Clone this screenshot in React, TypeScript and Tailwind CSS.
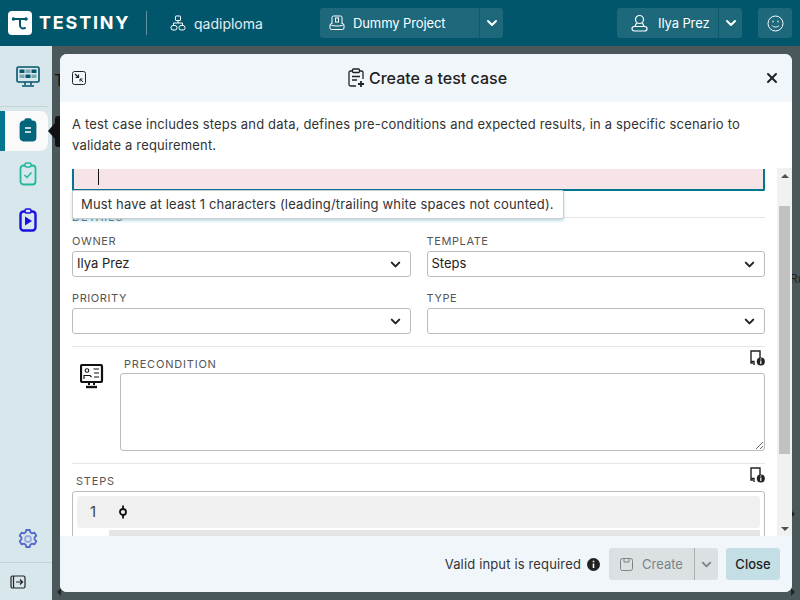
import React from 'react';
import { ChevronDown, X } from 'lucide-react';

const ff = { fontFamily: 'Inter, sans-serif' };

function TestinyLogo() {
  return (
    <svg width="24" height="24" viewBox="0 0 24 24">
      <rect width="24" height="24" rx="4" fill="#fff" />
      <path d="M6 8h12M12 8v6c0 3 2 4 5 3" stroke="#02566b" strokeWidth="2" fill="none" strokeLinecap="round" />
      <circle cx="5.500" cy="8" r="1.800" fill="#02566b" />
      <circle cx="18" cy="8" r="1.800" fill="#02566b" />
    </svg>
  );
}

function SelectField({ label, value }: { label: string; value?: string }) {
  return (
    <div className="flex-1 min-w-0">
      <div className="h-[18px] text-[11px] leading-[16px] tracking-[0.6px] text-[#555]">{label}</div>
      <div className="h-[26px] flex items-center justify-between border border-[#bbb] rounded-[3px] pl-[4px] pr-[7px] text-[13px] text-[#222]">
        <span>{value}</span>
        <ChevronDown size={15} strokeWidth={3.2} className="text-[#222]" />
      </div>
    </div>
  );
}

function DocInfo() {
  return (
    <svg width="16" height="16" viewBox="0 0 16 16" fill="none">
      <path d="M4 13H2V1h9v7" stroke="#222" strokeWidth="1.400" />
      <path d="M2 11.500h3v3.500" stroke="#222" strokeWidth="1.400" />
      <circle cx="11.800" cy="11.500" r="4" fill="#222" />
      <path d="M11.800 10.500v3.500M11.800 8.500v1" stroke="#fff" strokeWidth="1.200" />
    </svg>
  );
}

function Clipboard({ color, fill, width = 1.800, children }: { color: string; fill?: boolean; width?: number; children?: React.ReactNode }) {
  return (
    <svg width="18" height="24" viewBox="0 0 18 24" fill="none">
      <rect x="1.500" y="3.500" width="15" height="19" rx="3" stroke={color} strokeWidth={width} fill={fill ? color : 'none'} />
      <rect x="6" y="1" width="6" height="4" rx="1.500" stroke={color} strokeWidth="1.500" fill={fill ? color : '#d7e7ec'} />
      {children}
    </svg>
  );
}

export default function App() {
  return (
    <div style={ff} className="relative w-[800px] h-[600px] overflow-hidden bg-[#4b585b]">
      {/* top bar */}
      <header className="h-[46px] bg-[#02566b] flex items-center text-white">
        <div className="flex items-center pl-[8px] w-[146px] h-full">
          <TestinyLogo />
          <span className="ml-[7px] font-bold text-[18px] tracking-[1.800px] leading-none">TESTINY</span>
        </div>
        <div className="w-px h-[24px] bg-[#5c94a2]" />
        <div className="flex items-center ml-[23px] w-[150px] gap-[8px] text-[14px]">
          <svg width="16" height="16" viewBox="0 0 16 16" fill="none" stroke="#fff" strokeWidth="1">
            <rect x="5.500" y="1" width="5" height="4.500" rx="0.500" />
            <path d="M8 5.500V8M3.500 10.500V8h9v2.500" />
            <rect x="1" y="10.500" width="6" height="4.500" rx="2" />
            <rect x="9" y="10.500" width="6" height="4.500" rx="2" />
          </svg>
          <span className="text-[#e4eff2]">qadiploma</span>
        </div>
        <div className="flex h-[30px] rounded-[3px] bg-[#1d687b] text-[13px]">
          <div className="w-[160px] flex items-center pl-[9px] gap-[8px] border-r border-[#0e5a6d]">
            <svg width="16" height="16" viewBox="0 0 16 16" fill="none" stroke="#fff" strokeWidth="1">
              <path d="M3 9V2.500A1.500 1.500 0 0 1 4.500 1h7A1.500 1.500 0 0 1 13 2.500V9" />
              <path d="M1 9.500 3 8M15 9.500 13 8M1 9.500V13a1.500 1.500 0 0 0 1.500 1.500h11A1.500 1.500 0 0 0 15 13V9.500c-3 2-11 2-14 0z" />
              <rect x="6.500" y="3" width="3" height="4" />
            </svg>
            <span className="tracking-[-0.1px] pt-[1px]">Dummy Project</span>
          </div>
          <div className="w-[23px] flex items-center justify-center">
            <ChevronDown size={16} strokeWidth={3} />
          </div>
        </div>
        <div className="flex h-[30px] ml-[114px] rounded-[3px] bg-[#1d687b] text-[13px]">
          <div className="w-[102px] flex items-center pl-[14px] gap-[10px] border-r border-[#0e5a6d]">
            <svg width="17" height="18" viewBox="0 0 17 18" fill="none" stroke="#fff" strokeWidth="1.200">
              <circle cx="8.500" cy="5.500" r="4" />
              <path d="M5.500 9 4 12.500M11.500 9 13 12.500" />
              <rect x="1" y="12.500" width="15" height="4.500" rx="2.200" />
            </svg>
            <span className="tracking-[-0.1px] pt-[1px]">Ilya Prez</span>
          </div>
          <div className="w-[23px] flex items-center justify-center">
            <ChevronDown size={16} strokeWidth={3} />
          </div>
        </div>
        <div className="ml-[16px] w-[34px] h-[30px] rounded-[3px] bg-[#1d687b] flex items-center justify-center">
          <svg width="17" height="17" viewBox="0 0 17 17" fill="none" stroke="#fff" strokeWidth="1">
            <circle cx="8.500" cy="8.500" r="7.500" />
            <path d="M5 10.500c1.500 2 5.500 2 7 0" />
            <path d="M6 5.500v2M11 5.500v2" />
          </svg>
        </div>
      </header>

      <div className="flex h-[554px]">
        {/* sidebar */}
        <aside className="w-[52px] bg-[#d7e7ec] flex flex-col relative">
          <div className="h-[61px] border-b border-[#c3d4d9] flex items-center justify-center pl-[8px] mr-[4px]">
            <svg width="24" height="21" viewBox="0 0 24 21" fill="none">
              <rect x="1" y="1" width="22" height="15" rx="1.500" stroke="#02566b" strokeWidth="1.600" />
              <rect x="3.500" y="3.500" width="5" height="3.500" fill="#02566b" />
              <rect x="9.500" y="3.500" width="5" height="3.500" fill="#7ea6b1" />
              <rect x="15.500" y="3.500" width="5" height="3.500" fill="#02566b" />
              <rect x="3.500" y="8.500" width="5" height="3.500" fill="#7ea6b1" />
              <rect x="9.500" y="8.500" width="5" height="3.500" fill="#02566b" />
              <rect x="15.500" y="8.500" width="5" height="3.500" fill="#7ea6b1" />
              <path d="M9 16v3M15 16v3M6 20h12" stroke="#02566b" strokeWidth="1.500" />
            </svg>
          </div>
          <div className="mt-[4px] h-[40px] w-[48px] bg-[#fafafa] rounded-r-[8px] border-l-[5px] border-[#02758f] flex items-center justify-center pb-[2px] pl-[3px]">
            <Clipboard color="#02657c" fill>
              <path d="M6 10h6M6 14h6" stroke="#fff" strokeWidth="1.500" />
            </Clipboard>
          </div>
          <div className="h-[48px] flex items-center justify-center pb-[2px] pl-[4px]">
            <Clipboard color="#1fb99b">
              <path d="m5.500 13 2.500 2.500 4.500-5" stroke="#1fb99b" strokeWidth="1.500" />
            </Clipboard>
          </div>
          <div className="h-[42px] flex items-center justify-center pl-[4px]">
            <Clipboard color="#1a10e0" width={2.400}>
              <path d="M6 8.500v9l7-4.500z" fill="#1a10e0" />
            </Clipboard>
          </div>
          <div className="mt-auto h-[44px] flex items-center justify-center pl-[4px] pb-[4px] border-b border-[#c3d4d9]">
            <svg width="20" height="20" viewBox="0 0 20 20" fill="none" stroke="#5567c9" strokeWidth="1.800">
              <path d="M8.200 1h3.600l.5 2.300 1.900 1.100 2.300-.7 1.800 3.100-1.700 1.600v2.200l1.700 1.600-1.800 3.100-2.300-.7-1.900 1.100-.5 2.300H8.200l-.5-2.300-1.900-1.100-2.300.7-1.800-3.100 1.700-1.600V8.400L1.700 6.800l1.800-3.100 2.300.7 1.900-1.100z" strokeLinejoin="round" />
              <circle cx="10" cy="10" r="3" stroke="#9aa7e0" />
            </svg>
          </div>
          <div className="h-[37px] flex items-center justify-center pr-[16px]">
            <svg width="16" height="16" viewBox="0 0 16 16" fill="none" stroke="#222" strokeWidth="1.200">
              <path d="M4 2H2.500A1.500 1.500 0 0 0 1 3.500v9A1.500 1.500 0 0 0 2.500 14H4" />
              <rect x="3.500" y="2" width="11.500" height="12" rx="1.500" />
              <path d="M6 8h6M10 5.500 12.500 8 10 10.500" />
            </svg>
          </div>
          {/* active item tooltip caret */}
          <div className="absolute left-[48px] top-[77px] w-0 h-0 border-y-[8px] border-y-transparent border-r-[7px] border-r-[#111]" />
        </aside>
        <div className="flex-1 relative overflow-hidden">
          <div className="absolute left-[2px] top-[22px] text-[16px] text-[#111]">T</div>
          <div className="absolute left-[3px] top-[70px] w-[8px] h-[31px] bg-[#111] rounded-l-[3px]" />
          <div className="absolute left-[738px] top-[224px] text-[12px] text-[#222]">Ru</div>
          <div className="absolute left-[739px] top-[464px] w-0 h-0 border-y-[4px] border-y-transparent border-l-[4px] border-l-[#222]" />
          <div className="absolute left-[739px] top-[542px] w-0 h-0 border-y-[4px] border-y-transparent border-l-[4px] border-l-[#222]" />
          <div className="absolute left-[5px] top-[542px] w-0 h-0 border-y-[4px] border-y-transparent border-r-[4px] border-r-[#222]" />
        </div>
      </div>

      {/* modal */}
      <div className="absolute left-[60px] top-[54px] w-[732px] h-[538px] rounded-[7px] bg-white overflow-hidden flex flex-col">
        <div className="h-[48px] shrink-0 bg-[#f1f6fa] flex items-center justify-between pl-[12px] pr-[12px]">
          <svg width="14" height="14" viewBox="0 0 14 14" fill="none" stroke="#222" strokeWidth="1">
            <rect x="0.500" y="0.500" width="13" height="13" rx="2" />
            <path d="M3 3l3.500 3.500M6.500 3.500v3h-3" strokeWidth="1.200" />
            <path d="M11 11 8 8M8 10.500V8h2.500" />
          </svg>
          <div className="flex items-center gap-[4px] text-[16px] font-medium text-[#222] pl-[5px]">
            <svg width="17" height="20" viewBox="0 0 17 20" fill="none" stroke="#222" strokeWidth="1.300">
              <path d="M4 3H2.500A1.500 1.500 0 0 0 1 4.500v12A1.500 1.500 0 0 0 2.500 18H8M12 3h1.500A1.500 1.500 0 0 1 15 4.500V11" />
              <rect x="4.500" y="1" width="7" height="3.500" rx="1" />
              <path d="M4 8.500h8M4 12h5" />
              <path d="M13 13v6M10 16h6" strokeWidth="1.800" />
            </svg>
            <span>Create a test case</span>
          </div>
          <X size={16} strokeWidth={3} className="text-[#222]" />
        </div>

        <div className="h-[66px] shrink-0 px-[12px] pt-[12px] text-[13px] leading-[21px] tracking-[0.17px] text-[#333]">
          A test case includes steps and data, defines pre-conditions and expected results, in a specific scenario to<br />validate a requirement.
        </div>

        <div className="flex-1 min-h-0 flex relative">
          <div className="flex-1 min-w-0 overflow-hidden pl-[12px] pr-[12px]">
            <div className="h-[22px] bg-[#f7e4e9] border-x-2 border-b-2 border-[#02758f] rounded-b-[2px] pl-[24px]">
              <div className="w-px h-[16px] mt-[1px] bg-[#111]" />
            </div>
            <div className="h-[27px] border-b border-[#e5e5e5] flex items-end">
              <span className="text-[11px] leading-[14px] tracking-[1px] text-[#555] translate-y-[7px]">DETAILS</span>
            </div>
            <div className="pt-[15px] flex gap-[16px]">
              <SelectField label="OWNER" value="Ilya Prez" />
              <SelectField label="TEMPLATE" value="Steps" />
            </div>
            <div className="pt-[13px] flex gap-[16px]">
              <SelectField label="PRIORITY" />
              <SelectField label="TYPE" />
            </div>
            <div className="mt-[12px] border-t border-[#e5e5e5] flex relative pb-[12px]">
              <div className="w-[48px] pt-[17px] pl-[8px]">
                <svg width="24" height="25" viewBox="0 0 24 25" fill="none" stroke="#111">
                  <rect x="1" y="1" width="21" height="17" rx="1.500" strokeWidth="2.200" />
                  <circle cx="7" cy="6.500" r="1.800" strokeWidth="1.100" />
                  <path d="M4 15v-3.500h6l1.500 1.500M13.500 5H19M14 9h5M14 13h5" strokeWidth="1.100" />
                  <path d="M9 18v3M14 18v3" strokeWidth="2" />
                  <path d="M6 23h11" strokeWidth="2.400" />
                </svg>
              </div>
              <div className="flex-1 min-w-0">
                <div className="h-[26px] pl-[4px] pt-[10px] text-[11px] leading-[14px] tracking-[0.8px] text-[#555]">PRECONDITION</div>
                <textarea className="block w-full h-[78px] border border-[#bbb] rounded-[3px] outline-none" />
              </div>
              <div className="absolute right-0 top-[3px]"><DocInfo /></div>
            </div>
            <div className="border-t border-[#e5e5e5] relative">
              <div className="h-[27px] pl-[4px] pt-[10px] text-[11px] leading-[14px] tracking-[0.8px] text-[#555]">STEPS</div>
              <div className="absolute right-0 top-[3px]"><DocInfo /></div>
              <div className="border border-[#bbb] rounded-[3px] p-[4px] h-[80px]">
                <div className="h-[32px] bg-[#f0f0f0] rounded-[3px] flex items-center text-[15px] text-[#444]">
                  <span className="w-[32px] text-center">1</span>
                  <svg width="10" height="16" viewBox="0 0 10 16" fill="none" stroke="#111" strokeWidth="1.800" className="ml-[9px]">
                    <circle cx="5" cy="8" r="3" />
                    <path d="M5 1.500V5M5 11v3.500" />
                  </svg>
                </div>
                <div className="ml-[32px] h-[8px] mt-[2px] bg-[#e5e5e5]" />
              </div>
            </div>
          </div>
          {/* scrollbar */}
          <div className="w-[15px] shrink-0 bg-[#f1f1f1] flex flex-col items-center">
            <div className="h-[15px] flex items-center justify-center">
              <div className="w-0 h-0 border-x-[4px] border-x-transparent border-b-[4px] border-b-[#505050]" />
            </div>
            <div className="w-[11px] h-[248px] mt-[23px] bg-[#c1c1c1]" />
            <div className="h-[15px] mt-auto flex items-center justify-center">
              <div className="w-0 h-0 border-x-[4px] border-x-transparent border-t-[4px] border-t-[#505050]" />
            </div>
          </div>
          {/* validation message */}
          <div className="absolute left-[12px] top-[22px] h-[29px] w-[492px] bg-white border border-[#ccc] rounded-[2px] shadow-[0_2px_3px_rgba(120,185,205,0.5)] flex items-center pl-[8px] text-[13px] tracking-[0.17px] whitespace-nowrap text-[#333]">
            Must have at least 1 characters (leading/trailing white spaces not counted).
          </div>
        </div>

        <div className="h-[56px] shrink-0 bg-[#f1f6fa] flex items-center justify-end pr-[12px] text-[13px]">
          <span className="tracking-[0.15px] text-[#333] pt-[1px]">Valid input is required</span>
          <svg width="13" height="13" viewBox="0 0 13 13" className="ml-[6px]">
            <circle cx="6.500" cy="6.500" r="6.500" fill="#222" />
            <path d="M6.500 5.500v4.500M6.500 2.800v1.400" stroke="#fff" strokeWidth="1.600" />
          </svg>
          <div className="ml-[9px] h-[32px] flex rounded-[3px] bg-[#dbe1e2] text-[#7c8486]">
            <div className="w-[86px] flex items-center pl-[11px] gap-[9px] border-r border-[#a9b0b1]">
              <svg width="13" height="13" viewBox="0 0 13 13" fill="none" stroke="#7c8486" strokeWidth="1">
                <rect x="0.500" y="0.500" width="12" height="12" rx="2" />
                <path d="M4 0.500v3.500h5V0.500" />
              </svg>
              <span className="pt-[1px]">Create</span>
            </div>
            <div className="w-[23px] flex items-center justify-center">
              <ChevronDown size={15} strokeWidth={3} />
            </div>
          </div>
          <div className="ml-[8px] h-[32px] w-[54px] rounded-[3px] bg-[#c3dee5] flex items-center justify-center font-medium text-[#222] pt-[1px]">Close</div>
        </div>
      </div>
    </div>
  );
}
